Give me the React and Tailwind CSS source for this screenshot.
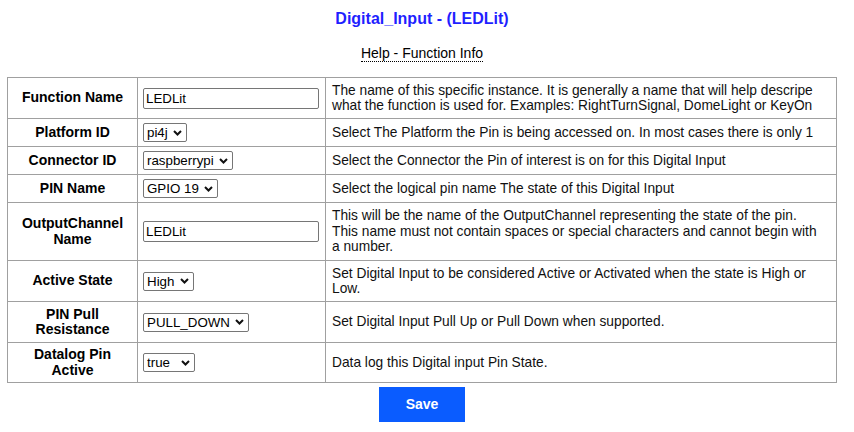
import React, { useState } from "react";

const rows = [
  {
    label: "Function Name",
    kind: "input",
    value: "LEDLit",
    h: "h-[41px]",
    desc: "The name of this specific instance. It is generally a name that will help descripe what the function is used for. Examples: RightTurnSignal, DomeLight or KeyOn",
  },
  {
    label: "Platform ID",
    kind: "select",
    value: "pi4j",
    w: "w-[44px]",
    h: "h-[28px]",
    desc: "Select The Platform the Pin is being accessed on. In most cases there is only 1",
  },
  {
    label: "Connector ID",
    kind: "select",
    value: "raspberrypi",
    w: "w-[90px]",
    h: "h-[28px]",
    desc: "Select the Connector the Pin of interest is on for this Digital Input",
  },
  {
    label: "PIN Name",
    kind: "select",
    value: "GPIO 19",
    w: "w-[75px]",
    h: "h-[28px]",
    desc: "Select the logical pin name The state of this Digital Input",
  },
  {
    label: "OutputChannel Name",
    kind: "input",
    value: "LEDLit",
    h: "h-[58px]",
    desc: "This will be the name of the OutputChannel representing the state of the pin. This name must not contain spaces or special characters and cannot begin with a number.",
  },
  {
    label: "Active State",
    kind: "select",
    value: "High",
    w: "w-[51px]",
    h: "h-[41px]",
    desc: "Set Digital Input to be considered Active or Activated when the state is High or Low.",
  },
  {
    label: "PIN Pull Resistance",
    kind: "select",
    value: "PULL_DOWN",
    w: "w-[106px]",
    h: "h-[41px]",
    desc: "Set Digital Input Pull Up or Pull Down when supported.",
  },
  {
    label: "Datalog Pin Active",
    kind: "select",
    value: "true",
    w: "w-[52px]",
    h: "h-[40px]",
    desc: "Data log this Digital input Pin State.",
  },
];

const Chevron = () => (
  <svg
    className="pointer-events-none absolute right-[5px] top-1/2 -translate-y-1/2"
    width="9"
    height="6"
    viewBox="0 0 9 6"
  >
    <path d="M1 1l3.5 3.5L8 1" fill="none" stroke="#111" strokeWidth="2" />
  </svg>
);

const Field = ({ row }) => {
  const [val, setVal] = useState(row.value);
  if (row.kind === "input") {
    return (
      <input
        value={val}
        onChange={(e) => setVal(e.target.value)}
        className="w-[176px] h-[21px] px-[2px] border border-[#767676] rounded-[2px] text-[13.33px] text-black outline-none"
      />
    );
  }
  return (
    <div className={`relative inline-block align-middle ${row.w}`}>
      <select
        value={val}
        onChange={(e) => setVal(e.target.value)}
        className="appearance-none w-full h-[19px] pl-[3px] pr-[14px] border border-[#767676] rounded-[2px] bg-white text-[13.33px] leading-[17px] text-black outline-none"
      >
        <option value={row.value}>{row.value}</option>
      </select>
      <Chevron />
    </div>
  );
};

export default function App() {
  return (
    <div
      className="w-[844px] bg-white text-black"
      style={{ fontFamily: '"Liberation Sans", Arial, sans-serif' }}
    >
      <h1 className="pt-[10px] text-center text-[16px] leading-[18px] font-bold text-[#1f1fff]">
        Digital_Input - (LEDLit)
      </h1>

      <div className="mt-[17px] text-center text-[14px] leading-[16px]">
        <span className="border-b border-dotted border-black">Help - Function Info</span>
      </div>

      <table className="ml-[7px] mt-[16px] w-[830px] border-collapse text-[14px] leading-[15.5px]">
        <tbody>
          {rows.map((row) => (
            <tr key={row.label} className={row.h}>
              <td className="w-[130px] border border-[#a0a0a0] px-[4px] text-center font-bold align-middle">
                {row.label}
              </td>
              <td className="w-[188px] border border-[#a0a0a0] pl-[5px] align-middle">
                <Field row={row} />
              </td>
              <td className="border border-[#a0a0a0] pl-[6px] pr-[14px] align-middle text-[13.75px] text-[#111]">
                {row.desc}
              </td>
            </tr>
          ))}
        </tbody>
      </table>

      <div className="mt-[4px] flex justify-center">
        <button className="w-[86px] h-[35px] bg-[#0a5cff] text-white text-[14px] font-semibold">
          Save
        </button>
      </div>
    </div>
  );
}
